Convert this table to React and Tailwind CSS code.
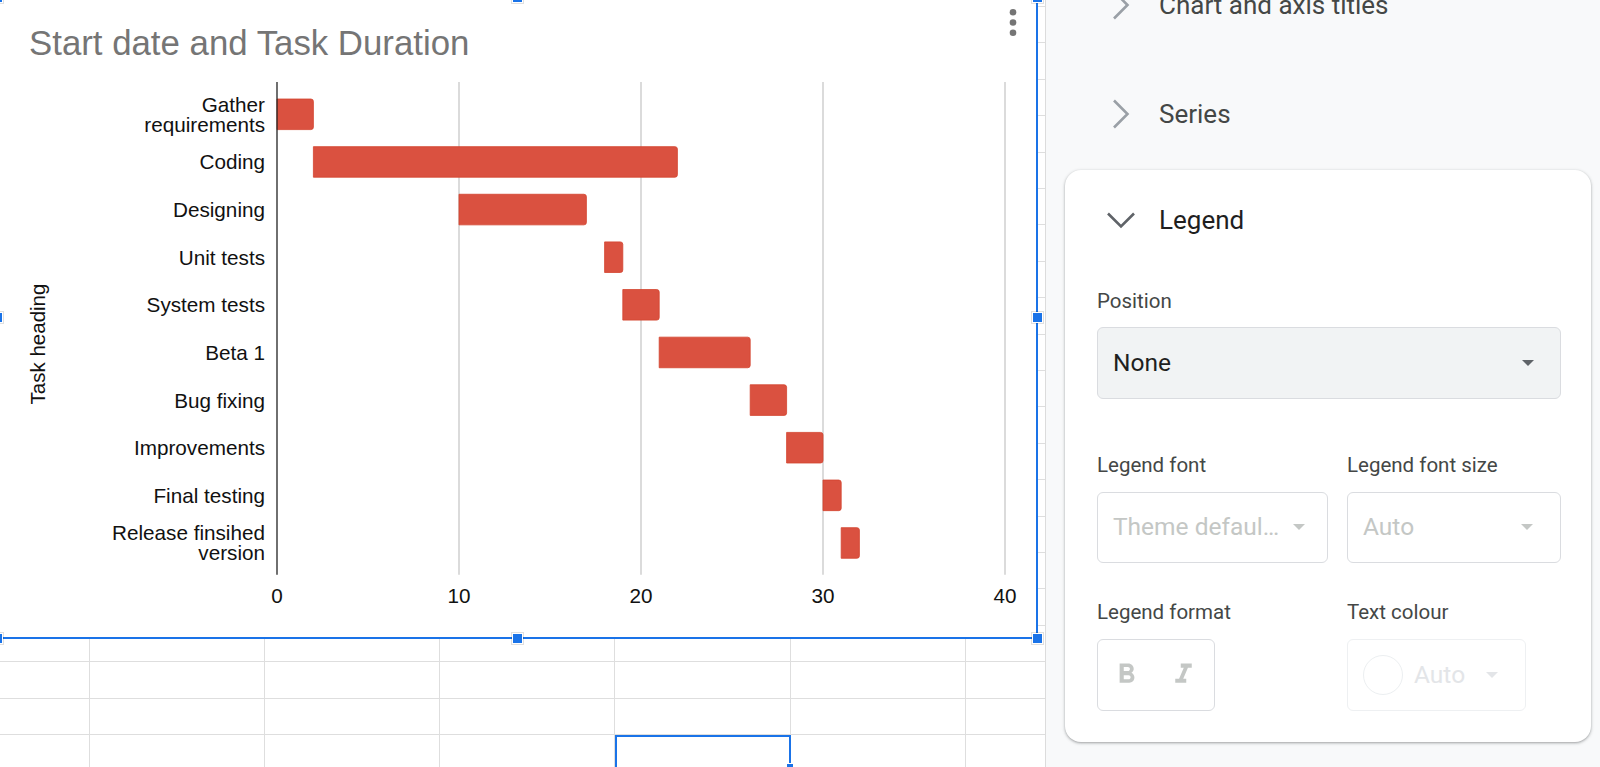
import React from "react";

const X0 = 277;
const U = 18.2;
const tasks = [
  { label: ["Gather", "requirements"], s: 0, e: 2 },
  { label: ["Coding"], s: 2, e: 22 },
  { label: ["Designing"], s: 10, e: 17 },
  { label: ["Unit tests"], s: 18, e: 19 },
  { label: ["System tests"], s: 19, e: 21 },
  { label: ["Beta 1"], s: 21, e: 26 },
  { label: ["Bug fixing"], s: 26, e: 28 },
  { label: ["Improvements"], s: 28, e: 30 },
  { label: ["Final testing"], s: 30, e: 31 },
  { label: ["Release finsihed", "version"], s: 31, e: 32 },
];

function barPath(x1, y, x2, h) {
  const r = 2.5;
  return `M${x1},${y} H${x2 - r} Q${x2},${y} ${x2},${y + r} V${y + h - r} Q${x2},${y + h} ${x2 - r},${y + h} H${x1} Z`;
}

function GanttChart() {
  const ticks = [0, 10, 20, 30, 40];
  return (
    <svg
      width="1038"
      height="639"
      viewBox="-2 -2 1038 639"
      className="block font-['Liberation_Sans',Arial,sans-serif]"
    >
      <text x="29" y="54.5" fontSize="34.8" fill="#757575">
        Start date and Task Duration
      </text>
      <circle cx="1013" cy="12.3" r="3.3" fill="#757575" />
      <circle cx="1013" cy="22.5" r="3.3" fill="#757575" />
      <circle cx="1013" cy="32.7" r="3.3" fill="#757575" />

      {ticks.slice(1).map((t) => (
        <line
          key={t}
          x1={X0 + t * U}
          x2={X0 + t * U}
          y1="82"
          y2="574.7"
          stroke="#c8c8c8"
          strokeWidth="1.3"
        />
      ))}

      {tasks.map((t, i) => {
        const y = 99 + 47.63 * i;
        return (
          <path
            key={i}
            d={barPath(X0 + t.s * U, y, X0 + t.e * U, 30.6)}
            fill="#da5140"
            stroke="#d3442f"
            strokeWidth="0.8"
          />
        );
      })}

      <line x1={X0} x2={X0} y1="82" y2="574.7" stroke="#222222" strokeWidth="1.3" />

      {tasks.map((t, i) => {
        const cy = 114.3 + 47.63 * i;
        if (t.label.length === 1) {
          return (
            <text key={i} x="265" y={cy + 7.5} fontSize="20.7" fill="#111111" textAnchor="end">
              {t.label[0]}
            </text>
          );
        }
        return (
          <text key={i} x="265" fontSize="20.7" fill="#111111" textAnchor="end">
            <tspan x="265" y={cy - 2.8}>
              {t.label[0]}
            </tspan>
            <tspan x="265" y={cy + 17.4}>
              {t.label[1]}
            </tspan>
          </text>
        );
      })}

      <text
        transform="translate(45,344) rotate(-90)"
        fontSize="20.5"
        fill="#111111"
        textAnchor="middle"
      >
        Task heading
      </text>

      {ticks.map((t) => (
        <text
          key={t}
          x={X0 + t * U}
          y="602.5"
          fontSize="20.7"
          fill="#111111"
          textAnchor="middle"
        >
          {t}
        </text>
      ))}
    </svg>
  );
}

function Handle({ className }) {
  return (
    <div
      className={
        "absolute size-[11px] border border-white bg-[#1a73e8] shadow-[0_0_0_1px_rgba(0,0,0,0.12)] " +
        className
      }
    />
  );
}

function Sheet() {
  const rows = Array.from({ length: 22 });
  const cols = Array.from({ length: 6 });
  return (
    <div className="relative h-full w-[1046px] shrink-0 overflow-hidden border-r border-[#dcdcdc] bg-white">
      <div className="mt-[-29.3px] flex flex-col">
        {rows.map((_, r) => (
          <div key={r} className="flex h-[36.4px] shrink-0">
            <div className="h-full w-[89.5px] shrink-0 border-b border-r border-[#dedede]" />
            {cols.map((__, c) => (
              <div key={c} className="h-full w-[175.3px] shrink-0 border-b border-r border-[#dedede]" />
            ))}
          </div>
        ))}
      </div>

      <div className="absolute left-[615px] top-[735px] h-[40px] w-[176px] border-2 border-[#1a73e8]" />
      <div className="absolute left-[786px] top-[763px] size-[8px] border border-white bg-[#1a73e8]" />

      <div className="absolute left-[-4px] top-[-4px] h-[643px] w-[1042px] border-2 border-[#1a73e8] bg-white">
        <GanttChart />
      </div>

      <Handle className="left-[-8.5px] top-[-8.5px]" />
      <Handle className="left-[511.5px] top-[-8.5px]" />
      <Handle className="left-[1031.5px] top-[-8.5px]" />
      <Handle className="left-[-8.5px] top-[312px]" />
      <Handle className="left-[1031.5px] top-[312px]" />
      <Handle className="left-[-8.5px] top-[632.5px]" />
      <Handle className="left-[511.5px] top-[632.5px]" />
      <Handle className="left-[1031.5px] top-[632.5px]" />
    </div>
  );
}

function ChevronRight() {
  return (
    <svg width="32" height="32" viewBox="0 0 32 32" className="shrink-0">
      <polyline points="9,2.5 22.5,16 9,29.5" fill="none" stroke="#9aa0a6" strokeWidth="2.6" />
    </svg>
  );
}

function ChevronDown() {
  return (
    <svg width="32" height="32" viewBox="0 0 32 32" className="shrink-0">
      <polyline points="3,9.5 16,22.5 29,9.5" fill="none" stroke="#5f6368" strokeWidth="2.6" />
    </svg>
  );
}

function Caret({ color }) {
  return (
    <svg width="12" height="6" viewBox="0 0 12 6" className="shrink-0">
      <path d="M0 0h12L6 6z" fill={color} />
    </svg>
  );
}

function Label({ children }) {
  return <div className="text-[20.5px] leading-[24px] text-[#444746]">{children}</div>;
}

function SidePanel() {
  return (
    <div className="flex h-full flex-1 flex-col overflow-hidden bg-[#f8f9fa]">
      <div className="mt-[-48px] flex h-[106px] shrink-0 items-center pl-[59px]">
        <ChevronRight />
        <span className="ml-[22px] whitespace-nowrap text-[26px] leading-[30px] text-[#444746]">
          Chart and axis titles
        </span>
      </div>
      <div className="flex h-[112px] shrink-0 items-center pl-[59px]">
        <ChevronRight />
        <span className="ml-[22px] text-[26px] leading-[30px] text-[#444746]">Series</span>
      </div>

      <div className="ml-[19px] mr-[9px] shrink-0 rounded-[16px] bg-white pb-[31px] shadow-[0_1px_2px_0_rgba(60,64,67,0.3),0_1px_3px_1px_rgba(60,64,67,0.15)]">
        <div className="flex h-[100px] items-center pl-[40px]">
          <ChevronDown />
          <span className="ml-[22px] text-[26px] leading-[30px] text-[#1f1f1f]">Legend</span>
        </div>

        <div className="flex flex-col pl-[32px] pr-[30px]">
          <div className="mt-[18.7px]">
            <Label>Position</Label>
          </div>
          <div className="mt-[14px] flex h-[72px] items-center justify-between rounded-[6px] border border-[#dadce0] bg-[#f1f3f4] pl-[15px] pr-[26px]">
            <span className="text-[24.5px] leading-[30px] text-[#1f1f1f]">None</span>
            <Caret color="#5f6368" />
          </div>

          <div className="mt-[54px] flex gap-[19px]">
            <div className="flex w-[231px] shrink-0 flex-col">
              <Label>Legend font</Label>
              <div className="mt-[15px] flex h-[71px] items-center justify-between rounded-[6px] border border-[#dadce0] pl-[15px] pr-[22px]">
                <span className="whitespace-nowrap text-[24.5px] leading-[30px] text-[#c4c7c5]">
                  Theme defaul…
                </span>
                <Caret color="#c4c7c5" />
              </div>
            </div>
            <div className="flex flex-1 flex-col">
              <Label>Legend font size</Label>
              <div className="mt-[15px] flex h-[71px] items-center justify-between rounded-[6px] border border-[#dadce0] pl-[15px] pr-[27px]">
                <span className="text-[24.5px] leading-[30px] text-[#c4c7c5]">Auto</span>
                <Caret color="#c4c7c5" />
              </div>
            </div>
          </div>

          <div className="mt-[37px] flex gap-[19px]">
            <div className="flex w-[231px] shrink-0 flex-col">
              <Label>Legend format</Label>
              <div className="mt-[15px] flex h-[72px] w-[118px] items-center gap-[24px] rounded-[6px] border border-[#dadce0] pl-[12px]">
                <svg width="33" height="33" viewBox="0 0 24 24" className="shrink-0">
                  <path
                    fill="#c4c7c5"
                    d="M15.6 10.79c.97-.67 1.65-1.770 1.65-2.79 0-2.26-1.75-4-4-4H7v14h7.04c2.09 0 3.71-1.7 3.71-3.79 0-1.52-.86-2.82-2.15-3.42zM10 6.5h3c.83 0 1.5.67 1.5 1.5s-.67 1.5-1.5 1.5h-3v-3zm3.5 9H10v-3h3.5c.83 0 1.5.67 1.5 1.5s-.67 1.5-1.5 1.5z"
                  />
                </svg>
                <svg width="33" height="33" viewBox="0 0 24 24" className="shrink-0">
                  <path fill="#c4c7c5" d="M10 4v3h2.21l-3.42 8H6v3h8v-3h-2.21l3.42-8H18V4z" />
                </svg>
              </div>
            </div>
            <div className="flex flex-1 flex-col">
              <Label>Text colour</Label>
              <div className="mt-[15px] flex h-[72px] w-[179px] items-center rounded-[6px] border border-[#eef0f2] pl-[15px]">
                <div className="size-[40px] shrink-0 rounded-full border border-[#eceff1]" />
                <span className="ml-[11px] text-[24.5px] leading-[30px] text-[#e3e5e8]">Auto</span>
                <div className="ml-[21px]">
                  <Caret color="#e3e5e8" />
                </div>
              </div>
            </div>
          </div>
        </div>
      </div>
    </div>
  );
}

export default function App() {
  return (
    <div className="flex h-[767px] w-[1600px] overflow-hidden bg-white font-['Roboto',Arial,sans-serif]">
      <Sheet />
      <SidePanel />
    </div>
  );
}
